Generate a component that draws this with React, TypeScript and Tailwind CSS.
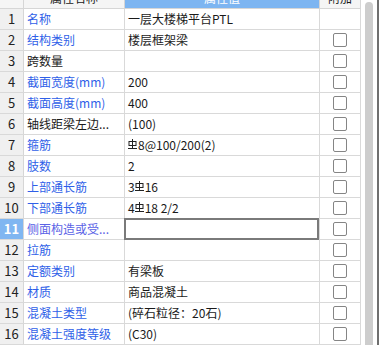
import React from 'react';

type Row = {
  name: string;
  value: React.ReactNode;
  blue: boolean;
  check: boolean;
};

function Rebar() {
  return (
    <svg width="9" height="11" viewBox="0 0 9 11" className="inline-block -mt-[5px] mr-px align-middle">
      <rect x="1" y="2.5" width="7" height="4" fill="none" stroke="#222" strokeWidth="1" />
      <line x1="4.5" y1="0" x2="4.5" y2="9.5" stroke="#222" strokeWidth="1" />
      <line x1="0" y1="9.5" x2="9" y2="9.5" stroke="#222" strokeWidth="1" />
    </svg>
  );
}

const rows: Row[] = [
  { name: '名称', value: '一层大楼梯平台PTL', blue: true, check: false },
  { name: '结构类别', value: '楼层框架梁', blue: true, check: true },
  { name: '跨数量', value: '', blue: false, check: true },
  { name: '截面宽度(mm)', value: '200', blue: true, check: true },
  { name: '截面高度(mm)', value: '400', blue: true, check: true },
  { name: '轴线距梁左边...', value: '(100)', blue: false, check: true },
  { name: '箍筋', value: <><Rebar />8@100/200(2)</>, blue: true, check: true },
  { name: '肢数', value: '2', blue: true, check: true },
  { name: '上部通长筋', value: <>3<Rebar />16</>, blue: true, check: true },
  { name: '下部通长筋', value: <>4<Rebar />18 2/2</>, blue: true, check: true },
  { name: '侧面构造或受...', value: '', blue: true, check: true },
  { name: '拉筋', value: '', blue: true, check: true },
  { name: '定额类别', value: '有梁板', blue: true, check: true },
  { name: '材质', value: '商品混凝土', blue: true, check: true },
  { name: '混凝土类型', value: '(碎石粒径：20石)', blue: true, check: true },
  { name: '混凝土强度等级', value: '(C30)', blue: true, check: true },
];

export default function App() {
  return (
    <div
      className="relative w-[379px] h-[345px] overflow-hidden bg-white flex text-[12px] text-[#1a1a1a]"
      style={{ fontFamily: '"Noto Sans CJK SC", "Microsoft YaHei", sans-serif' }}
    >
      <div className="w-[361px] shrink-0 flex flex-col">
        {/* header, mostly scrolled off the top */}
        <div className="flex h-[21px] -mt-[12px] shrink-0 border-b border-[#d6d6d6]">
          <div className="w-[24px] border-r border-[#d6d6d6] bg-[#f5f5f5]" />
          <div className="w-[101px] border-r border-[#d6d6d6] bg-[#f5f5f5] flex items-center justify-center leading-none">
            属性名称
          </div>
          <div className="w-[195px] border-r border-[#d6d6d6] bg-[#7db5f1] text-white flex items-center justify-center leading-none">
            属性值
          </div>
          <div className="w-[41px] border-r border-[#d6d6d6] bg-[#f5f5f5] flex items-center justify-center leading-none">
            附加
          </div>
        </div>

        {rows.map((r, i) => {
          const active = i === 10;
          return (
            <div key={i} className="flex h-[21px] shrink-0 border-b border-[#d9d9d9]">
              <div
                className={`w-[24px] border-r border-[#d6d6d6] flex items-center justify-center text-[13px] ${
                  active ? 'bg-[#80b6f1] text-white font-bold' : 'bg-[#f0f0f0] text-[#222]'
                }`}
              >
                {i + 1}
              </div>
              <div
                className={`w-[101px] border-r border-[#d9d9d9] flex items-center pl-[3px] whitespace-nowrap overflow-hidden ${
                  r.blue ? (active ? 'text-[#5a62e6]' : 'text-[#2f5fe8]') : 'text-[#1a1a1a]'
                }`}
              >
                {r.name}
              </div>
              <div className="w-[195px] border-r border-[#d9d9d9] flex items-center whitespace-nowrap">
                {active ? (
                  <div className="w-[195px] h-[22px] -mt-px -ml-px border-2 border-[#7a7a7a] bg-white" />
                ) : (
                  <span className="pl-[3px]">{r.value}</span>
                )}
              </div>
              <div className="w-[41px] border-r border-[#d9d9d9] flex items-center justify-center">
                {r.check && <div className="w-[14px] h-[14px] border border-[#858585] rounded-[2px] bg-white" />}
              </div>
            </div>
          );
        })}
      </div>

      <div className="w-[4px] shrink-0" />
      <div className="w-[8px] shrink-0 pt-[2px]">
        <div className="w-full h-full bg-[#cdcdcd] rounded-t-[4px]" />
      </div>
      <div className="w-[4px] shrink-0" />
      <div className="w-[2px] shrink-0 bg-[#6f6f6f]" />
    </div>
  );
}
